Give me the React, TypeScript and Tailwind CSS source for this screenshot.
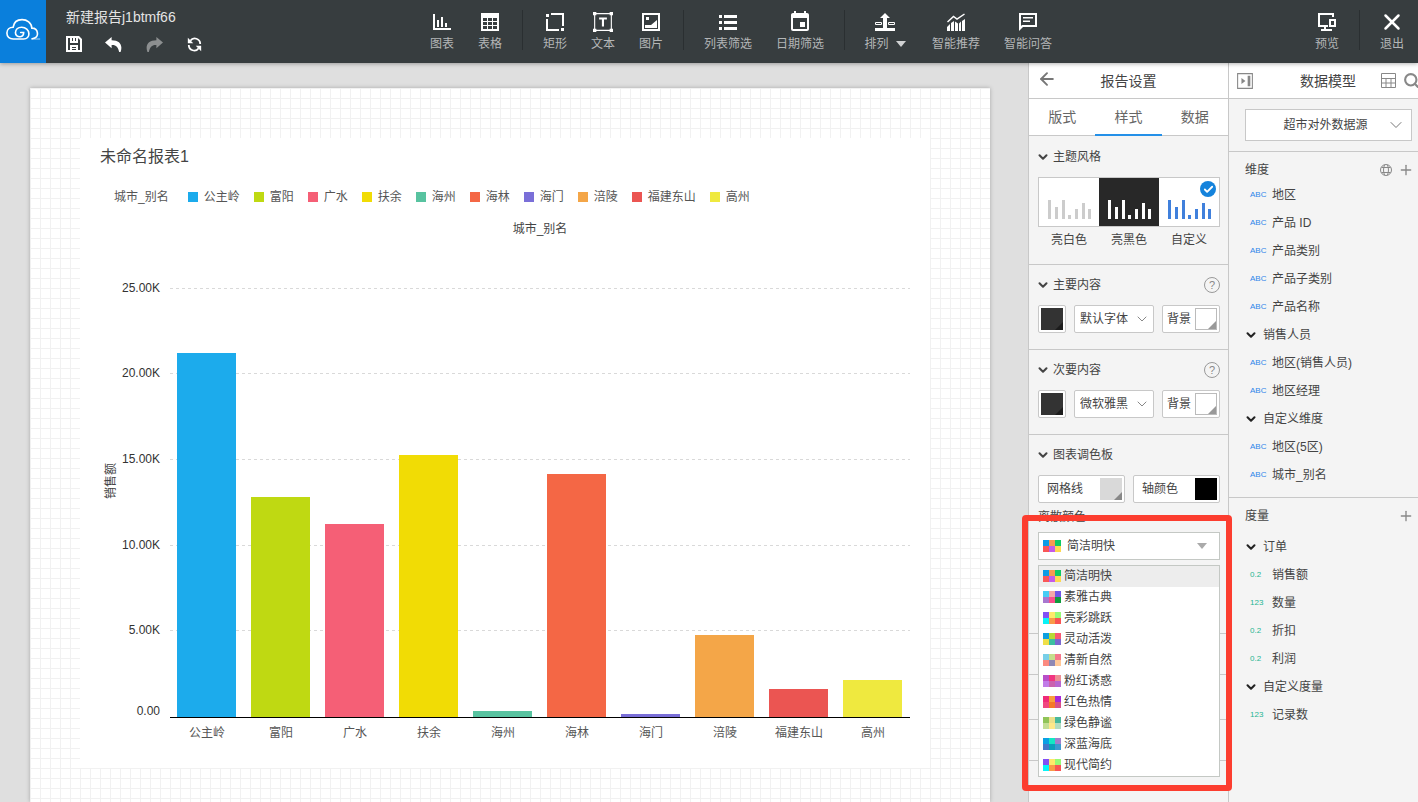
import { useState, type ReactNode } from 'react';
import { ArrowLeft, Check, ChevronDown, Plus, Search, X } from 'lucide-react';
import { MdEvent } from 'react-icons/md';

const cities = [
  { name: '公主岭', value: 21.24, color: '#1cabec' },
  { name: '富阳', value: 12.84, color: '#bfd912' },
  { name: '广水', value: 11.26, color: '#f55f76' },
  { name: '扶余', value: 15.29, color: '#f1dc05' },
  { name: '海州', value: 0.36, color: '#58c3a0' },
  { name: '海林', value: 14.18, color: '#f46745' },
  { name: '海门', value: 0.18, color: '#7a6fd8' },
  { name: '涪陵', value: 4.78, color: '#f4a648' },
  { name: '福建东山', value: 1.64, color: '#eb5552' },
  { name: '高州', value: 2.16, color: '#efe93f' },
];

const palettes = [
  { name: '简洁明快', colors: ['#0d9be6', '#f79a50', '#0fc964', '#f95757', '#c35be8', '#ffd950'] },
  { name: '素雅古典', colors: ['#45cdf5', '#f3a8a8', '#7157e8', '#a877cf', '#f94f8d', '#109a3c'] },
  { name: '亮彩跳跃', colors: ['#8250f5', '#ffe96a', '#98f976', '#08f3f7', '#f99a48', '#f95353'] },
  { name: '灵动活泼', colors: ['#0d9fe0', '#b8d936', '#f95a72', '#efdf48', '#3cc0a0', '#7a68d0'] },
  { name: '清新自然', colors: ['#78cfe8', '#c4de8c', '#f5788c', '#fb8a80', '#8f88b4', '#ffc898'] },
  { name: '粉红诱惑', colors: ['#b84fc8', '#f13580', '#ec8f94', '#c17ce8', '#cb62ae', '#b868d0'] },
  { name: '红色热情', colors: ['#f02a78', '#fa9f3c', '#a828d8', '#f04880', '#f57828', '#d8508a'] },
  { name: '绿色静谧', colors: ['#90c458', '#ece08c', '#48b89c', '#c4de94', '#ffe888', '#b4dcc0'] },
  { name: '深蓝海底', colors: ['#0aa0e4', '#12e8c4', '#a080cc', '#4478c8', '#0aa0b8', '#3c98d0'] },
  { name: '现代简约', colors: ['#8250f5', '#ffe96a', '#98f976', '#08f3f7', '#f99a48', '#f95353'] },
];

const dimensions = [
  { type: 'ABC', name: '地区' },
  { type: 'ABC', name: '产品 ID' },
  { type: 'ABC', name: '产品类别' },
  { type: 'ABC', name: '产品子类别' },
  { type: 'ABC', name: '产品名称' },
  { type: 'group', name: '销售人员' },
  { type: 'ABC', name: '地区(销售人员)' },
  { type: 'ABC', name: '地区经理' },
  { type: 'group', name: '自定义维度' },
  { type: 'ABC', name: '地区(5区)' },
  { type: 'ABC', name: '城市_别名' },
];

const measures = [
  { type: 'group', name: '订单' },
  { type: '0.2', name: '销售额' },
  { type: '123', name: '数量' },
  { type: '0.2', name: '折扣' },
  { type: '0.2', name: '利润' },
  { type: 'group', name: '自定义度量' },
  { type: '123', name: '记录数' },
];

function Glyph({ children, className = 'h-[18px] w-[18px]' }: { children: ReactNode; className?: string }) {
  return (
    <svg viewBox="0 0 18 18" fill="currentColor" className={className} aria-hidden="true">
      {children}
    </svg>
  );
}

const icons = {
  chart: (
    <Glyph>
      <path d="M0 1h2v14h16v2H0zM4 7h2v7H4zM8 4h2v10H8zM12 10h2v4h-2z" />
    </Glyph>
  ),
  table: (
    <Glyph>
      <path
        fillRule="evenodd"
        d="M0 0h18v18H0zM2 5v3h4V5zM7 5v3h4V5zM12 5v3h4V5zM2 9v3h4V9zM7 9v3h4V9zM12 9v3h4V9zM2 13v3h4v-3zM7 13v3h4v-3zM12 13v3h4v-3z"
      />
    </Glyph>
  ),
  rect: (
    <Glyph>
      <path d="M0 1h3v3H0zM5 0h13v13h-2V2H5zM0 6h2v10h11v2H0zM15 15h3v3h-3z" />
    </Glyph>
  ),
  text: (
    <Glyph className="h-5 w-5">
      <path d="M1.500 1.500h15v15h-15z" fill="none" stroke="currentColor" />
      <path d="M0 0h3v3H0zM15 0h3v3h-3zM0 15h3v3H0zM15 15h3v3h-3zM5.500 5h7v1.800h-2.600V13H8V6.800H5.500z" />
    </Glyph>
  ),
  image: (
    <Glyph>
      <path fillRule="evenodd" d="M0 0h18v18H0zM2 2v14h14V2z" />
      <path d="M4 4h3v3H4zM15 7v8H3v-3h6z" />
    </Glyph>
  ),
  list: (
    <Glyph>
      <path d="M0 2h3v3H0zM5 2h13v3H5zM0 8h3v3H0zM5 8h13v3H5zM0 14h3v3H0zM5 14h13v3H5z" />
    </Glyph>
  ),
  date: <MdEvent className="h-6 w-6" />,
  arrange: (
    <svg viewBox="0 0 20 18" fill="currentColor" className="h-[18px] w-5" aria-hidden="true">
      <path d="M10 0l5 5h-3v10h8v3H0v-3h8V5H5z" />
      <path d="M.500 9.500H6.500v2h-6zM13.500 9.500h6v2h-6z" fill="none" stroke="currentColor" />
    </svg>
  ),
  insight: (
    <Glyph>
      <path d="M.500 9l6-5.500 3.500 2.500L17.500 1" fill="none" stroke="currentColor" strokeWidth="1.500" />
      <path d="M0 14l3-3v7H0zM4 10l3-2v10H4zM8 8.500l3 2V18H8zM12 10.500V18h2V8.500zM15 8l3-2v12h-3z" />
    </Glyph>
  ),
  chat: (
    <Glyph>
      <path fillRule="evenodd" d="M0 0h18v14H4l-4 4zM2 2v11l1-1h13V2z" />
      <path d="M4 4h10v1.500H4zM4 7.500h7V9H4z" />
    </Glyph>
  ),
  preview: (
    <Glyph>
      <path d="M0 0h16v4h-2V2H2v10h8v2H8v2h6v2H3v-2h3v-2H0z" />
      <path fillRule="evenodd" d="M11 6h7v8h-7zM13 8v4h3V8z" />
    </Glyph>
  ),
  exit: <X className="h-[26px] w-[26px]" strokeWidth={2.3} />,
};

function ToolButton({ icon, label, className, caret }: { icon: ReactNode; label: string; className: string; caret?: boolean }) {
  return (
    <button type="button" className={`flex flex-col items-center ${className}`}>
      <span className="flex h-6 items-center text-white">{icon}</span>
      <span className="flex h-5 items-center gap-[7px] text-xs text-[#b4b6b7]">
        {label}
        {caret && (
          <svg viewBox="0 0 10 6" className="h-1.5 w-2.5 text-[#d0d2d3]" fill="currentColor" aria-hidden="true">
            <path d="M0 0h10L5 6z" />
          </svg>
        )}
      </span>
    </button>
  );
}

function Divider() {
  return <span className="mx-2 h-10 w-px bg-[#2a2f31]" />;
}

function Header() {
  return (
    <header className="relative z-10 flex h-[63px] shrink-0 bg-[#373d3f] text-white shadow-[0_1px_4px_rgba(0,0,0,0.3)]">
      <a href="#" aria-label="首页" className="flex w-[46px] items-center justify-center bg-[#0a7fdc] pb-1">
        <svg viewBox="14 54 108 70" className="h-[23px] w-9" fill="none" stroke="white" strokeWidth="5" strokeLinecap="round">
          <path d="M96 117c13-1 17-9 16-17-1-9-8-15-17-15C94 69 80 59 65 59S40 68 38 82C27 82 19 89 19 100c0 11 8 18 19 18h32c10 0 16-7 16-16 0-12-10-20-22-20s-19 8-19 17c0 8 7 13 15 12 6-1 10-4 10-13h-9" />
          <path d="M94 118h25" strokeWidth="2" />
        </svg>
      </a>
      <div className="w-[372px] pl-5 pt-1.5">
        <h1 className="h-[22px] text-sm leading-[22px] text-[#e4e4e4]">新建报告j1btmf66</h1>
        <div className="mt-2 flex h-4 items-center">
          <button type="button" aria-label="保存" className="mr-[23px]">
            <svg viewBox="0 0 16 16" className="h-4 w-4" fill="currentColor" aria-hidden="true">
              <path fillRule="evenodd" d="M0 0h13l3 3v13H0zM2 2v12h2V9h8v5h2V4l-2-2v5H4V2zM6 2v3h1V2zM9 2v3h1V2zM6 11v1h4v-1zM6 13v1h4v-1z" />
            </svg>
          </button>
          <button type="button" aria-label="撤销" className="mr-6">
            <Glyph className="h-[17px] w-[17px]">
              <path d="M7 1L0 7l7 6V9.500c4-.5 7 1.500 8 7.500h1.500C19 10 16 4.500 7 4.500z" />
            </Glyph>
          </button>
          <button type="button" aria-label="重做" className="mr-6 text-[#8c8f90]">
            <Glyph className="h-[17px] w-[17px]">
              <path d="M11 1l7 6-7 6V9.500C7 9 4 11 3 17H1.500C-1 10 2 4.500 11 4.500z" />
            </Glyph>
          </button>
          <button type="button" aria-label="刷新">
            <Glyph className="h-[15px] w-[15px]">
              <path d="M4 4.500a6.500 6.500 0 0 1 11.800 4M14 13.500A6.500 6.500 0 0 1 2.200 9.500" fill="none" stroke="currentColor" strokeWidth="2.200" />
              <path d="M1 1v6.500h6.500zM17 17v-6.500h-6.500z" />
            </Glyph>
          </button>
        </div>
      </div>
      <div className="flex items-start pt-2.5">
        <ToolButton icon={icons.chart} label="图表" className="w-12" />
        <ToolButton icon={icons.table} label="表格" className="w-12" />
        <Divider />
        <ToolButton icon={icons.rect} label="矩形" className="w-12" />
        <ToolButton icon={icons.text} label="文本" className="w-12" />
        <ToolButton icon={icons.image} label="图片" className="w-12" />
        <Divider />
        <ToolButton icon={icons.list} label="列表筛选" className="w-[72px]" />
        <ToolButton icon={icons.date} label="日期筛选" className="w-[72px]" />
        <Divider />
        <ToolButton icon={icons.arrange} label="排列" className="mr-[3px] w-16" caret />
        <ToolButton icon={icons.insight} label="智能推荐" className="w-[72px]" />
        <ToolButton icon={icons.chat} label="智能问答" className="w-[72px]" />
      </div>
      <div className="ml-auto flex items-start pr-0.5 pt-2.5">
        <ToolButton icon={icons.preview} label="预览" className="w-12" />
        <Divider />
        <ToolButton icon={icons.exit} label="退出" className="w-12" />
      </div>
    </header>
  );
}

const BASE = 467;
const UNIT = 85.7 / 5;

function BarChart() {
  return (
    <svg viewBox="0 0 850 500" className="w-full text-xs" role="img" aria-label="各城市销售额">
      {[25, 20, 15, 10, 5, 0].map((tick) => {
        const y = Math.round(BASE - tick * UNIT) - 1;
        return (
          <g key={tick}>
            {tick > 0 && <path d={`M90 ${y + 0.5}H830`} stroke="#d9d9d9" strokeDasharray="3 3" />}
            <text x="80" y={tick > 0 ? y + 4 : y - 1} textAnchor="end" fill="#333">
              {tick > 0 ? `${tick}.00K` : '0.00'}
            </text>
          </g>
        );
      })}
      <text x="0" y="0" textAnchor="middle" fill="#444" transform="translate(35 231) rotate(-90)">
        销售额
      </text>
      {cities.map((city, i) => (
        <g key={city.name}>
          <rect x={97 + i * 74} y={Math.round(BASE - city.value * UNIT)} width="59" height={Math.round(city.value * UNIT)} fill={city.color} />
          <text x={127 + i * 74} y="487" textAnchor="middle" fill="#555">
            {city.name}
          </text>
        </g>
      ))}
      <path d="M90 467.500H830" stroke="#000" />
    </svg>
  );
}

function Report() {
  return (
    <main className="min-w-0 flex-1 overflow-hidden bg-[#dfdfdf] pl-[30px] pr-[38px] pt-[25px]">
      <div className="h-full bg-white bg-[linear-gradient(to_right,#f1f1f1_1px,transparent_1px),linear-gradient(to_bottom,#f1f1f1_1px,transparent_1px)] bg-[size:10px_10px] pl-[50px] pr-[60px] pt-[50px] shadow-[0_0_4px_rgba(0,0,0,0.25)]">
        <section className="bg-white pb-[18px]">
          <h2 className="pl-5 pt-[7px] text-base leading-6 text-[#444]">未命名报表1</h2>
          <ul className="flex items-center gap-[14px] pl-[34px] pt-[18px] text-xs leading-5 text-[#555]">
            <li className="mr-[5px]">城市_别名</li>
            {cities.map((city) => (
              <li key={city.name} className="flex items-center gap-1.5">
                <span className="h-2.5 w-2.5" style={{ backgroundColor: city.color }} />
                {city.name}
              </li>
            ))}
          </ul>
          <p className="pl-[70px] pt-3 text-center text-xs leading-5 text-[#444]">城市_别名</p>
          <div className="pt-[11px]">
            <BarChart />
          </div>
        </section>
      </div>
    </main>
  );
}

function Section({ title, help, className, children }: { title: string; help?: boolean; className: string; children: ReactNode }) {
  return (
    <section className={`border-b border-[#c8c8c8] pl-[9px] pr-2 ${className}`}>
      <div className="flex h-10 items-center justify-between">
        <button type="button" className="-ml-0.5 flex items-center gap-[3px] text-xs text-[#444]">
          <ChevronDown className="h-3.5 w-3.5" strokeWidth={3.5} />
          {title}
        </button>
        {help && (
          <button type="button" aria-label="帮助" className="flex h-4 w-4 items-center justify-center rounded-full border border-[#999] text-[11px] text-[#888]">
            ?
          </button>
        )}
      </div>
      {children}
    </section>
  );
}

function ThemeCard({ label, tone, selected }: { label: string; tone: string; selected?: boolean }) {
  return (
    <button type="button" aria-pressed={!!selected} className="flex-1 text-xs text-[#444]">
      <span className={`relative flex h-[50px] items-end justify-center border-y border-[#c8c8c8] pb-[7px] ${tone}`}>
        <svg viewBox="0 0 43 19" className="h-[19px] w-[43px]" fill="currentColor" aria-hidden="true">
          <path d="M0 0h3v19H0zM7 7h3v12H7zM14 0h3v19h-3zM20 15h3v4h-3zM27 9h3v10h-3zM34 3h3v16h-3zM40 9h3v10h-3z" />
        </svg>
        {selected && (
          <span className="absolute right-[3px] top-[3px] flex h-4 w-4 items-center justify-center rounded-full bg-[#1583dc] text-white">
            <Check className="h-[11px] w-[11px]" strokeWidth={4} />
          </span>
        )}
      </span>
      <span className="block leading-[26px]">{label}</span>
    </button>
  );
}

function Swatch({ tone, corner }: { tone: string; corner: string }) {
  return (
    <span className={`relative block h-[22px] w-[22px] ${tone}`}>
      <span className={`absolute bottom-0 right-0 h-2 w-2 [clip-path:polygon(100%_0,100%_100%,0_100%)] ${corner}`} />
    </span>
  );
}

function TextStyleRow({ font, name }: { font: string; name: string }) {
  return (
    <div className="flex gap-2">
      <button type="button" aria-label={`${name}颜色`} className="rounded-xs border border-[#c8c8c8] bg-white p-0.5">
        <Swatch tone="bg-[#333]" corner="bg-[#1c1c1c]" />
      </button>
      <div className="relative flex-1">
        <select aria-label={`${name}字体`} className="h-7 w-full appearance-none rounded-xs border border-[#c8c8c8] bg-white pl-[5px] text-xs text-[#444]">
          <option>{font}</option>
        </select>
        <ChevronDown className="pointer-events-none absolute right-1 top-1.5 h-4 w-4 text-[#888]" strokeWidth={1.5} />
      </div>
      <button type="button" className="flex h-7 w-[58px] items-center justify-between rounded-xs border border-[#c8c8c8] bg-white pl-1 pr-0.5 text-xs text-[#444]">
        背景
        <Swatch tone="border border-[#bbb] bg-white" corner="bg-[#999]" />
      </button>
    </div>
  );
}

function PaletteIcon({ colors }: { colors: string[] }) {
  return (
    <span className="grid h-3 w-[18px] grid-cols-3">
      {colors.map((color, i) => (
        <span key={i} style={{ backgroundColor: color }} />
      ))}
    </span>
  );
}

function PaletteSelect() {
  const [open, setOpen] = useState(true);
  const [selected, setSelected] = useState(0);

  return (
    <div className="relative">
      <button
        type="button"
        aria-haspopup="listbox"
        aria-expanded={open}
        aria-labelledby="palette-label"
        onClick={() => setOpen(!open)}
        className="flex h-7 w-full items-center border border-[#c4c8c4] bg-white pl-1 pr-3 text-xs text-[#444]"
      >
        <PaletteIcon colors={palettes[selected].colors} />
        <span className="ml-1.5">{palettes[selected].name}</span>
        <svg viewBox="0 0 10 6" className="ml-auto h-1.5 w-2.5" fill="#aaa" aria-hidden="true">
          <path d="M0 0h10L5 6z" />
        </svg>
      </button>
      {open && (
        <div role="listbox" aria-labelledby="palette-label" className="absolute inset-x-0 top-[33px] border border-[#c4c8c4] bg-white">
          {palettes.map((palette, i) => (
            <button
              key={palette.name}
              type="button"
              role="option"
              aria-selected={i === selected}
              onClick={() => setSelected(i)}
              className={`flex h-[21px] w-full items-center gap-[3px] pb-px pl-1 text-xs text-[#444] ${i === selected ? 'bg-[#ededed]' : ''}`}
            >
              <PaletteIcon colors={palette.colors} />
              {palette.name}
            </button>
          ))}
        </div>
      )}
      {/* highlight around the palette menu */}
      <div className="pointer-events-none absolute -left-4 -right-3 -top-[17px] h-[276px] rounded-sm border-6 border-[#fc3d2f]" />
    </div>
  );
}

function SettingsPanel() {
  const tabs = ['版式', '样式', '数据'];

  return (
    <aside className="relative z-[1] w-[200px] shrink-0 border-l border-[#c8c8c8] bg-[#f4f4f4]">
      <div className="flex h-9 items-center border-b border-[#c8c8c8] bg-white">
        <button type="button" aria-label="返回" className="w-9 pb-1 pl-2 text-[#777]">
          <ArrowLeft className="h-5 w-5" strokeWidth={2.3} />
        </button>
        <h2 className="flex-1 pr-9 text-center text-sm text-[#444]">报告设置</h2>
      </div>
      <div role="tablist" className="flex h-[37px] border-b border-[#c8c8c8] bg-white">
        {tabs.map((tab) => (
          <button
            key={tab}
            type="button"
            role="tab"
            aria-selected={tab === '样式'}
            className={`-mb-px flex-1 border-b-2 text-sm text-[#666] ${tab === '样式' ? 'border-[#2490e8]' : 'border-transparent'}`}
          >
            {tab}
          </button>
        ))}
      </div>
      <Section title="主题风格" className="pb-[11px] pt-px">
        <div className="flex border-x border-[#c8c8c8] [border-image:linear-gradient(#c8c8c8_50px,transparent_50px)_1]">
          <ThemeCard label="亮白色" tone="bg-white text-[#ccc]" />
          <ThemeCard label="亮黑色" tone="bg-[#282828] text-white" />
          <ThemeCard label="自定义" tone="bg-white text-[#4080dc]" selected />
        </div>
      </Section>
      <Section title="主要内容" help className="pb-4">
        <TextStyleRow font="默认字体" name="主要内容" />
      </Section>
      <Section title="次要内容" help className="pb-4">
        <TextStyleRow font="微软雅黑" name="次要内容" />
      </Section>
      <Section title="图表调色板" className="pb-[73px]">
        <div className="grid grid-cols-2 gap-2">
          <button type="button" className="flex h-7 items-center justify-between rounded-xs border border-[#c8c8c8] bg-white pl-2 pr-0.5 text-xs text-[#444]">
            网格线
            <Swatch tone="bg-[#d9d9d9]" corner="bg-[#888]" />
          </button>
          <button type="button" className="flex h-7 items-center justify-between rounded-xs border border-[#c8c8c8] bg-white pl-2 pr-0.5 text-xs text-[#444]">
            轴颜色
            <Swatch tone="bg-black" corner="bg-black" />
          </button>
        </div>
        <p id="palette-label" className="text-xs leading-[29px] text-[#444]">离散颜色</p>
        <PaletteSelect />
      </Section>
      <div className="h-[41px] border-b border-[#c8c8c8]" />
      <div className="h-[45px] border-b border-[#c8c8c8]" />
      <div className="h-[41px] border-b border-[#c8c8c8]" />
    </aside>
  );
}

function FieldList({ fields }: { fields: { type: string; name: string }[] }) {
  return (
    <ul className="text-xs text-[#444]">
      {fields.map((field) => (
        <li key={field.name} className="h-7">
          {field.type === 'group' ? (
            <button type="button" className="flex h-full items-center gap-[5px] pl-[15px]">
              <ChevronDown className="h-3.5 w-3.5 text-[#222]" strokeWidth={3.5} />
              {field.name}
            </button>
          ) : (
            <span className="flex h-full items-center pl-[21px]">
              <span
                className={`w-[22px] pt-px ${field.type === 'ABC' ? "font-['Liberation_Sans_Narrow','Liberation_Sans',sans-serif] text-[8px] text-[#2f86ea]" : 'text-[8px] font-medium text-[#1fb592]'}`}
              >
                {field.type}
              </span>
              {field.name}
            </span>
          )}
        </li>
      ))}
    </ul>
  );
}

function ModelPanel() {
  return (
    <aside className="w-[190px] shrink-0 overflow-hidden border-l border-[#c8c8c8] bg-[#f4f4f4]">
      <div className="flex h-9 items-center border-b border-[#c8c8c8] bg-white pl-2 text-[#888]">
        <button type="button" aria-label="收起" className="shrink-0">
          <Glyph className="h-4 w-4">
            <path d="M.700 .700h16.600v16.600H.700z" fill="none" stroke="currentColor" strokeWidth="1.200" />
            <path d="M5 5.500L9.500 9 5 12.500zM12 3h3v12h-3z" />
          </Glyph>
        </button>
        <h2 className="ml-[47px] shrink-0 text-sm text-[#444]">数据模型</h2>
        <button type="button" aria-label="表格视图" className="ml-[25px] shrink-0">
          <svg viewBox="0 0 15 15" className="h-[15px] w-[15px]" fill="none" stroke="currentColor" aria-hidden="true">
            <path d="M.500 .500h14v14H.500zM.500 5.500h14M.500 10h14M5 5.500v9M10 5.500v9" />
          </svg>
        </button>
        <button type="button" aria-label="搜索" className="ml-[7px] shrink-0">
          <Search className="h-[17px] w-[17px]" strokeWidth={3} />
        </button>
      </div>
      <div className="relative border-b border-[#c8c8c8] pb-2.5 pl-4 pr-1.5 pt-2.5">
        <select aria-label="数据源" className="h-8 w-full appearance-none border border-[#c8c8c8] bg-white pr-1.5 text-center text-xs text-[#444]">
          <option>超市对外数据源</option>
        </select>
        <ChevronDown className="pointer-events-none absolute right-3 top-4 h-5 w-5 text-[#777]" strokeWidth={1.2} />
      </div>
      <section className="border-b border-[#c8c8c8] pb-2">
        <div className="flex h-[29px] items-center pl-4 pr-1 pt-1.5 text-[#888]">
          <h3 className="flex-1 text-xs text-[#444]">维度</h3>
          <button type="button" aria-label="地理维度">
            <svg viewBox="0 0 12 12" className="h-3 w-3" fill="none" stroke="currentColor" aria-hidden="true">
              <circle cx="6" cy="6" r="5.5" />
              <path d="M1.500 3.500h9M1.500 8.500h9M4.500 1C3.200 4 3.200 8 4.500 11M7.500 1c1.300 3 1.300 7 0 10" />
            </svg>
          </button>
          <button type="button" aria-label="添加维度" className="ml-1.5">
            <Plus className="h-4 w-4" strokeWidth={2} />
          </button>
        </div>
        <FieldList fields={dimensions} />
      </section>
      <section>
        <div className="flex h-[35px] items-center pl-4 pr-1 text-[#888]">
          <h3 className="flex-1 text-xs text-[#444]">度量</h3>
          <button type="button" aria-label="添加度量">
            <Plus className="h-4 w-4" strokeWidth={2} />
          </button>
        </div>
        <FieldList fields={measures} />
      </section>
    </aside>
  );
}

export default function App() {
  return (
    <div className="flex h-screen flex-col overflow-hidden font-['Liberation_Sans','Noto_Sans_CJK_SC',sans-serif]">
      <Header />
      <div className="flex min-h-0 flex-1">
        <Report />
        <SettingsPanel />
        <ModelPanel />
      </div>
    </div>
  );
}
